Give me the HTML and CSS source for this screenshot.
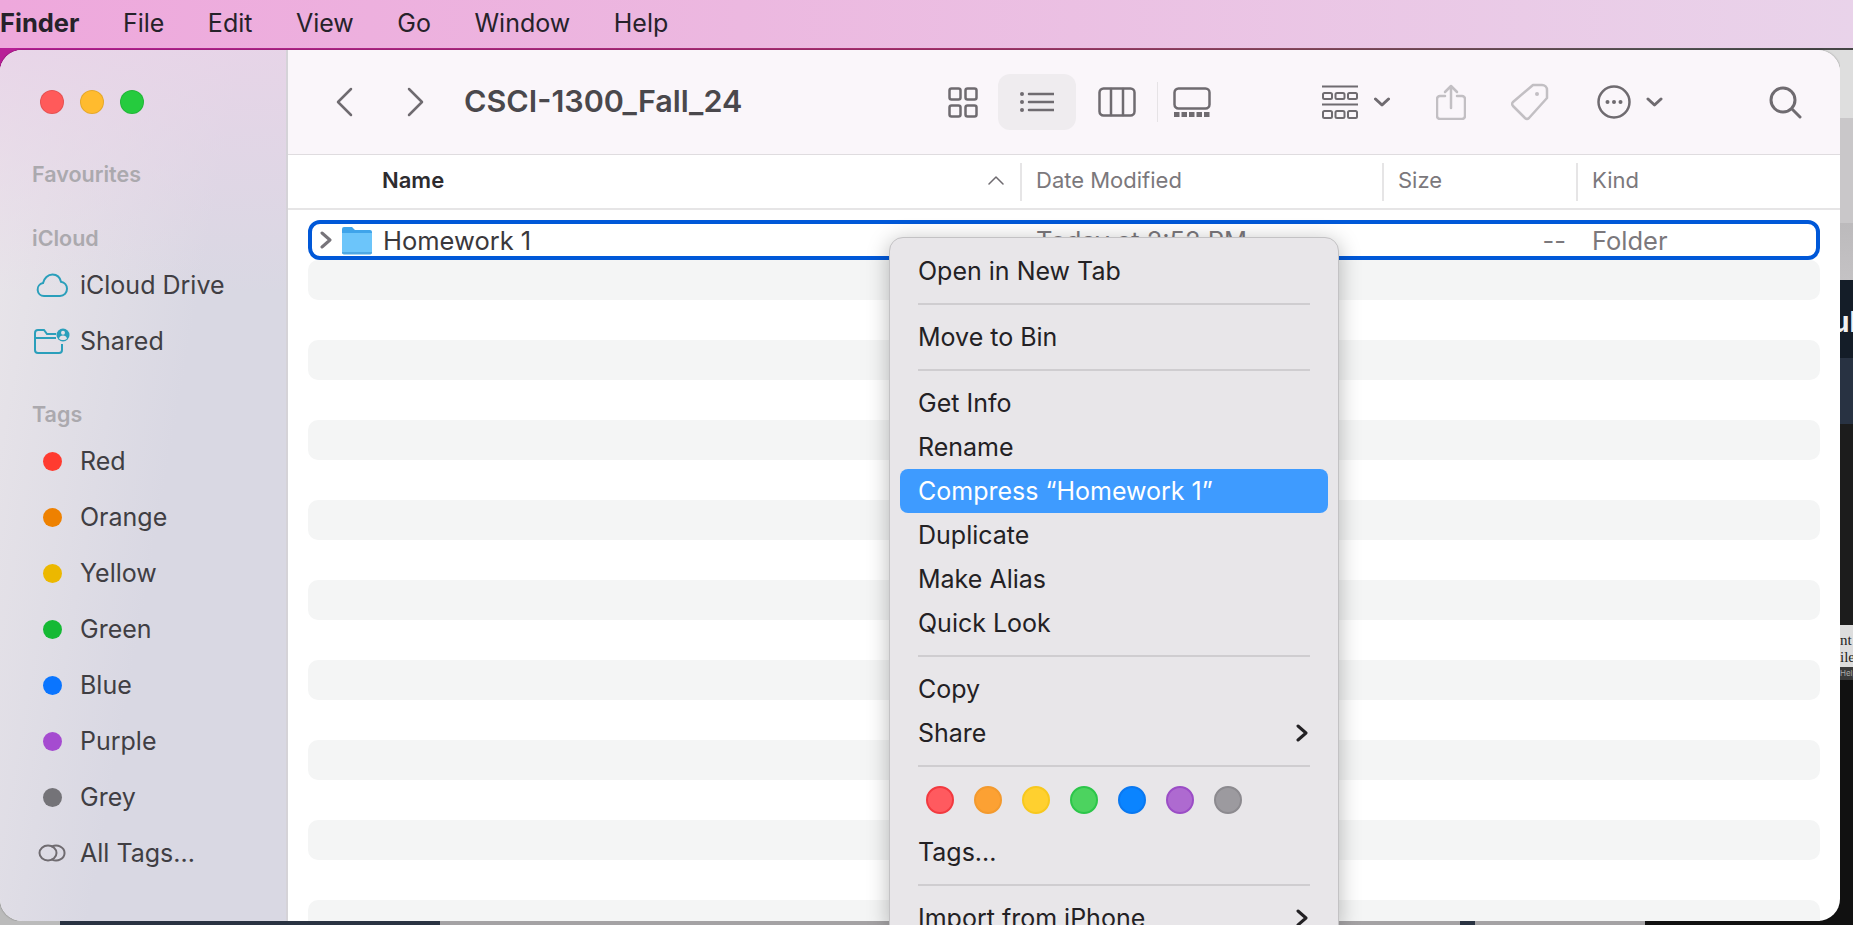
FILE: index.html
```html
<!DOCTYPE html>
<html lang="en">

<head>
    <meta charset="UTF-8">
    <title>Finder - CSCI-1300_Fall_24</title>
    <link rel="stylesheet" href="styles.css">
</head>

<body>
    <nav class="menubar">
        <span class="menubar-app">Finder</span>
        <span>File</span>
        <span>Edit</span>
        <span>View</span>
        <span>Go</span>
        <span>Window</span>
        <span>Help</span>
    </nav>
    <div class="topline"></div>

    <div class="desk">
        <div class="desk-main">
            <div class="window">
                <aside class="sidebar">
                    <div class="lights">
                        <span class="light light-red"></span>
                        <span class="light light-yellow"></span>
                        <span class="light light-green"></span>
                    </div>

                    <div class="side-label side-label-fav">Favourites</div>
                    <div class="side-label side-label-icloud">iCloud</div>
                    <div class="side-row">
                        <span class="side-icon">
                            <svg class="teal" width="32" height="24" viewBox="0 0 32 24">
                                <path d="M8 23a6.5 6.5 0 0 1-1-12.9C8 5 12 1.5 16.500 1.500c4.500 0 7.500 3 8.500 7.300 3.500.6 6 3.400 6 7 0 4-3 7.200-7 7.200z" />
                            </svg>
                        </span>
                        iCloud Drive
                    </div>
                    <div class="side-row">
                        <span class="side-icon">
                            <svg class="teal" width="36" height="26" viewBox="0 0 36 26">
                                <path d="M22 6H13l-3-4H4a3 3 0 0 0-3 3v17a3 3 0 0 0 3 3h21a3 3 0 0 0 3-3v-6" />
                                <path d="M1 10h21" />
                                <circle class="teal-fill" cx="29" cy="7" r="6.500" />
                                <circle class="person" cx="29" cy="4.800" r="2" />
                                <path class="person" d="M25 10.500c.5-2 2-3 4-3s3.500 1 4 3c-1 1-2.500 1.500-4 1.500s-3-.5-4-1.500z" />
                            </svg>
                        </span>
                        Shared
                    </div>

                    <div class="side-label side-label-tags">Tags</div>
                    <div class="side-row"><span class="side-icon"><i class="tag-dot tag-red"></i></span>Red</div>
                    <div class="side-row"><span class="side-icon"><i class="tag-dot tag-orange"></i></span>Orange</div>
                    <div class="side-row"><span class="side-icon"><i class="tag-dot tag-yellow"></i></span>Yellow</div>
                    <div class="side-row"><span class="side-icon"><i class="tag-dot tag-green"></i></span>Green</div>
                    <div class="side-row"><span class="side-icon"><i class="tag-dot tag-blue"></i></span>Blue</div>
                    <div class="side-row"><span class="side-icon"><i class="tag-dot tag-purple"></i></span>Purple</div>
                    <div class="side-row"><span class="side-icon"><i class="tag-dot tag-grey"></i></span>Grey</div>
                    <div class="side-row">
                        <span class="side-icon">
                            <svg class="ic ic-mid" width="28" height="18" viewBox="0 0 28 18">
                                <ellipse cx="10" cy="9" rx="8.500" ry="7.500" />
                                <path d="M14 2.400a8.500 7.500 0 1 1 0 13.200" />
                            </svg>
                        </span>
                        All Tags...
                    </div>
                </aside>

                <main class="content">
                    <header class="toolbar">
                        <svg class="ic tb-back" width="20" height="32" viewBox="0 0 20 32"><path d="M17 3L4 16l13 13" /></svg>
                        <svg class="ic tb-fwd" width="20" height="32" viewBox="0 0 20 32"><path d="M3 3l13 13L3 29" /></svg>
                        <div class="title">CSCI-1300_Fall_24</div>

                        <svg class="ic tb-grid" width="30" height="31" viewBox="0 0 30 31">
                            <rect x="1.500" y="1.500" width="11" height="11" rx="2" />
                            <rect x="17.500" y="1.500" width="11" height="11" rx="2" />
                            <rect x="1.500" y="18.500" width="11" height="11" rx="2" />
                            <rect x="17.500" y="18.500" width="11" height="11" rx="2" />
                        </svg>
                        <div class="view-active">
                            <svg class="ic" width="34" height="22" viewBox="0 0 34 22">
                                <path d="M9 3h25M9 11h25M9 19h25" />
                                <circle class="ic-fill" cx="2" cy="3" r="2" />
                                <circle class="ic-fill" cx="2" cy="11" r="2" />
                                <circle class="ic-fill" cx="2" cy="19" r="2" />
                            </svg>
                        </div>
                        <svg class="ic tb-cols" width="38" height="30" viewBox="0 0 38 30">
                            <rect x="1.500" y="1.500" width="35" height="27" rx="4" />
                            <path d="M13 2v26M25 2v26" />
                        </svg>
                        <div class="tb-divider"></div>
                        <svg class="ic tb-gallery" width="38" height="30" viewBox="0 0 38 30">
                            <rect x="1.500" y="1.500" width="35" height="20" rx="4" />
                            <path class="ic-dash" d="M1 27.500h36" />
                        </svg>

                        <svg class="ic ic-mid tb-group" width="36" height="34" viewBox="0 0 36 34">
                            <path d="M0 1.500h36M0 19.500h36" />
                            <rect x="1" y="8" width="9" height="6" rx="1.500" />
                            <rect x="13.500" y="8" width="9" height="6" rx="1.500" />
                            <rect x="26" y="8" width="9" height="6" rx="1.500" />
                            <rect x="1" y="26" width="9" height="7" rx="1.500" />
                            <rect x="13.500" y="26" width="9" height="7" rx="1.500" />
                            <rect x="26" y="26" width="9" height="7" rx="1.500" />
                        </svg>
                        <svg class="ic ic-bold tb-chev" width="16" height="10" viewBox="0 0 16 10"><path d="M1.500 2L8 8l6.500-6" /></svg>
                        <svg class="ic ic-off tb-share" width="30" height="36" viewBox="0 0 30 36">
                            <path d="M9 12H4a3 3 0 0 0-3 3v17a3 3 0 0 0 3 3h22a3 3 0 0 0 3-3V15a3 3 0 0 0-3-3h-5" />
                            <path d="M15 24V2M9 8l6-6 6 6" />
                        </svg>
                        <svg class="ic ic-off tb-tag" width="38" height="38" viewBox="0 0 38 38">
                            <path d="M22 2h9a5 5 0 0 1 5 5v8L18 35a3 3 0 0 1-4 0L2 23a3 3 0 0 1 0-4z" />
                            <circle class="ic-off-fill" cx="26" cy="11" r="2" />
                        </svg>
                        <svg class="ic tb-more" width="34" height="34" viewBox="0 0 34 34">
                            <circle cx="17" cy="17" r="15.500" />
                            <circle class="ic-fill" cx="10.500" cy="17" r="2" />
                            <circle class="ic-fill" cx="17" cy="17" r="2" />
                            <circle class="ic-fill" cx="23.500" cy="17" r="2" />
                        </svg>
                        <svg class="ic ic-bold tb-chev2" width="17" height="10" viewBox="0 0 17 10"><path d="M2 2l6.500 6L15 2" /></svg>
                        <svg class="ic ic-bold tb-search" width="33" height="33" viewBox="0 0 33 33">
                            <circle cx="14" cy="14" r="12" />
                            <path d="M23 23l8 8" />
                        </svg>
                    </header>

                    <div class="list-head">
                        <div class="col-name">
                            Name
                            <svg class="ic ic-thin sort" width="16" height="10" viewBox="0 0 16 10"><path d="M1 9l7-7 7 7" /></svg>
                        </div>
                        <div class="col">Date Modified</div>
                        <div class="col">Size</div>
                        <div class="col">Kind</div>
                    </div>

                    <div class="list">
                        <div class="row-selected">
                            <div class="row-name">
                                <svg class="ic ic-bold row-chev" width="12" height="18" viewBox="0 0 12 18"><path d="M2 2l8 7-8 7" /></svg>
                                <svg class="row-folder" width="32" height="29" viewBox="0 0 32 29">
                                    <path fill="#3fa4ea" d="M1 3a2 2 0 0 1 2-2h8l3 3h15a2 2 0 0 1 2 2v6H1z" />
                                    <path fill="#6cc5fa" d="M1 7h30v19a2 2 0 0 1-2 2H3a2 2 0 0 1-2-2z" />
                                    <path fill="#4ea8e4" d="M1 26h30a2 2 0 0 1-2 2.500H3A2 2 0 0 1 1 26z" />
                                </svg>
                                Homework 1
                            </div>
                            <div>Today at 2:52 PM</div>
                            <div class="row-size">--</div>
                            <div class="row-kind">Folder</div>
                        </div>
                        <div class="stripe"></div>
                        <div class="blank"></div>
                        <div class="stripe"></div>
                        <div class="blank"></div>
                        <div class="stripe"></div>
                        <div class="blank"></div>
                        <div class="stripe"></div>
                        <div class="blank"></div>
                        <div class="stripe"></div>
                        <div class="blank"></div>
                        <div class="stripe"></div>
                        <div class="blank"></div>
                        <div class="stripe"></div>
                        <div class="blank"></div>
                        <div class="stripe"></div>
                        <div class="blank"></div>
                        <div class="stripe"></div>
                    </div>
                </main>
            </div>
            <div class="bottom-strip">
                <span class="bs-light"></span>
                <span class="bs-navy"></span>
                <span class="bs-grey"></span>
                <span class="bs-navy2"></span>
                <span class="bs-grey2"></span>
                <span class="bs-black"></span>
            </div>
        </div>

        <div class="desk-right">
            <div class="dr-a"></div>
            <div class="dr-b"></div>
            <div class="dr-c"></div>
            <div class="dr-dark">ul</div>
            <div class="dr-blue"></div>
            <div class="dr-coal"></div>
            <div class="dr-page">nt<br>ile</div>
            <div class="dr-help">Help</div>
            <div class="dr-black"></div>
        </div>

        <div class="menu">
            <div class="menu-item">Open in New Tab</div>
            <div class="menu-sep"></div>
            <div class="menu-item">Move to Bin</div>
            <div class="menu-sep"></div>
            <div class="menu-item">Get Info</div>
            <div class="menu-item">Rename</div>
            <div class="menu-item menu-item-active">Compress “Homework 1”</div>
            <div class="menu-item">Duplicate</div>
            <div class="menu-item">Make Alias</div>
            <div class="menu-item">Quick Look</div>
            <div class="menu-sep"></div>
            <div class="menu-item">Copy</div>
            <div class="menu-item">
                Share
                <svg class="menu-arrow" width="12" height="18" viewBox="0 0 12 18"><path d="M2 2l8 7-8 7" /></svg>
            </div>
            <div class="menu-sep"></div>
            <div class="menu-dots">
                <i class="mdot mdot-red"></i>
                <i class="mdot mdot-orange"></i>
                <i class="mdot mdot-yellow"></i>
                <i class="mdot mdot-green"></i>
                <i class="mdot mdot-blue"></i>
                <i class="mdot mdot-purple"></i>
                <i class="mdot mdot-grey"></i>
            </div>
            <div class="menu-item">Tags...</div>
            <div class="menu-sep"></div>
            <div class="menu-item">
                Import from iPhone
                <svg class="menu-arrow" width="12" height="18" viewBox="0 0 12 18"><path d="M2 2l8 7-8 7" /></svg>
            </div>
        </div>
    </div>
</body>

</html>
```

FILE: styles.css
```css
* {
    box-sizing: border-box;
}

html,
body {
    margin: 0;
    height: 925px;
    overflow: hidden;
}

body {
    font-family: Inter, "Liberation Sans", sans-serif;
    font-size: 25px;
    color: #222;
    background: #111;
}

/* top menu bar */
.menubar {
    display: flex;
    align-items: center;
    gap: 43.500px;
    height: 48px;
    padding-bottom: 3px;
    font-size: 25px;
    color: #26222a;
    background: linear-gradient(90deg, #eea8dc 0%, #ecb8e0 40%, #e9d3ea 100%);
}

.menubar-app {
    font-size: 25.500px;
    font-weight: 700;
}

.topline {
    height: 2px;
    background: linear-gradient(90deg, #b81f97 0%, #a8326f 50%, #8a4a60 70%, #555 90%, #444 100%);
}

/* desktop behind the window */
.desk {
    position: relative;
    display: flex;
    height: 875px;
}

.desk-main {
    display: flex;
    flex-direction: column;
    width: 1840px;
    background:
        linear-gradient(90deg, #b81f97 50%, #dcdcdc 50%) top / 100% 30px no-repeat,
        linear-gradient(90deg, #bbb 50%, #111 50%) bottom / 100% 30px no-repeat;
}

.desk-right {
    display: flex;
    flex-direction: column;
    width: 13px;
    overflow: hidden;
}

.dr-a {
    height: 68px;
    background: #dedede;
}

.dr-b {
    height: 105px;
    background: #c9c7c9;
}

.dr-c {
    height: 57px;
    background: linear-gradient(180deg, #bcbabc, #c4c2c4);
}

.dr-dark {
    height: 78px;
    margin-left: -8px;
    padding-top: 22px;
    font-size: 28px;
    font-weight: 700;
    line-height: 40px;
    color: #f0f0f0;
    background: #141d28;
}

.dr-blue {
    height: 66px;
    background: #283242;
}

.dr-coal {
    height: 201px;
    background: #1c1c1c;
}

.dr-page {
    height: 42px;
    padding-top: 7px;
    font-family: "Liberation Serif", serif;
    font-size: 15px;
    line-height: 17px;
    color: #222;
    background: #dddddd;
}

.dr-help {
    height: 13px;
    font-size: 8px;
    line-height: 13px;
    color: #aaa;
    background: #3a3a3a;
}

.dr-black {
    flex: 1;
    background: #111;
}

.bottom-strip {
    display: flex;
    height: 4px;
}

.bs-light {
    width: 60px;
    background: #bbb;
}

.bs-navy {
    width: 380px;
    background: #2a3342;
}

.bs-grey {
    width: 1020px;
    background: #a4a2a4;
}

.bs-navy2 {
    width: 15px;
    background: #2a3342;
}

.bs-grey2 {
    width: 170px;
    background: #a4a2a4;
}

.bs-black {
    flex: 1;
    background: #111;
}

/* finder window */
.window {
    display: flex;
    height: 871px;
    overflow: hidden;
    border-radius: 22px;
    background: #fff;
    box-shadow: 0 0 2px rgba(0, 0, 0, 0.45);
}

.sidebar {
    flex: none;
    width: 288px;
    padding-left: 32px;
    color: #403e43;
    border-right: 2px solid #d5d3d8;
    background:
        linear-gradient(180deg, rgba(232, 212, 232, 0.9), rgba(232, 212, 232, 0) 28%),
        linear-gradient(100deg, #eae6ea 0%, #d9d8e3 55%);
}

.lights {
    display: flex;
    gap: 16px;
    margin: 40px 0 0 8px;
}

.light {
    width: 24px;
    height: 24px;
    border-radius: 50%;
    border: 1px solid rgba(0, 0, 0, 0.1);
}

.light-red {
    background: #ff5a5a;
}

.light-yellow {
    background: #ffbb2e;
}

.light-green {
    background: #25cb3e;
}

.side-label {
    height: 30px;
    font-size: 21.500px;
    font-weight: 600;
    line-height: 30px;
    color: #aba9ae;
}

.side-label-fav {
    margin-top: 45px;
}

.side-label-icloud {
    margin-top: 34px;
    margin-bottom: 4px;
}

.side-label-tags {
    margin-top: 30px;
    margin-bottom: 4px;
}

.side-row {
    display: flex;
    align-items: center;
    height: 56px;
}

.side-icon {
    display: flex;
    align-items: center;
    justify-content: center;
    width: 40px;
    margin-right: 8px;
}

.teal {
    fill: none;
    stroke: #2a9fbb;
    stroke-width: 2;
}

.teal-fill {
    fill: #2a9fbb;
    stroke: none;
}

.person {
    fill: #e4e1e8;
    stroke: none;
}

.tag-dot {
    width: 19px;
    height: 19px;
    border-radius: 50%;
}

.tag-red {
    background: #ff3b30;
}

.tag-orange {
    background: #ee8100;
}

.tag-yellow {
    background: #ecb800;
}

.tag-green {
    background: #15b934;
}

.tag-blue {
    background: #0a75ff;
}

.tag-purple {
    background: #a54bd0;
}

.tag-grey {
    background: #747378;
}

.content {
    flex: 1;
    min-width: 0;
}

/* toolbar icons */
.ic {
    flex: none;
    fill: none;
    stroke: #6f6b70;
    stroke-width: 2.5;
    stroke-linecap: round;
    stroke-linejoin: round;
}

.ic-fill {
    fill: #6f6b70;
    stroke: none;
}

.ic-mid {
    stroke-width: 2;
}

.ic-bold {
    stroke-width: 3;
}

.ic-thin {
    stroke-width: 1.5;
}

.ic-off {
    stroke: #c2bfc3;
}

.ic-off-fill {
    fill: #c2bfc3;
    stroke: none;
}

.ic-dash {
    stroke-width: 5;
    stroke-linecap: butt;
    stroke-dasharray: 5.500 2;
}

.toolbar {
    display: flex;
    align-items: center;
    height: 105px;
    border-bottom: 1px solid #dfdcdf;
    background: #faf6fa;
}

.tb-back {
    margin-left: 46px;
}

.tb-fwd {
    margin-left: 52px;
}

.title {
    flex: none;
    width: 277px;
    margin-left: 38px;
    padding-bottom: 3px;
    font-size: 30.500px;
    font-weight: 600;
    white-space: nowrap;
    color: #4a484c;
}

.tb-grid {
    margin-left: 207px;
}

.view-active {
    display: flex;
    align-items: center;
    justify-content: center;
    flex: none;
    width: 78px;
    height: 56px;
    margin-left: 20px;
    border-radius: 12px;
    background: #efecef;
}

.tb-cols {
    margin-left: 22px;
}

.tb-divider {
    flex: none;
    width: 1px;
    height: 40px;
    margin-left: 21px;
    background: #e6e3e6;
}

.tb-gallery {
    margin-left: 15px;
}

.tb-group {
    margin-left: 111px;
}

.tb-chev {
    margin-left: 16px;
}

.tb-share {
    margin-left: 46px;
}

.tb-tag {
    margin-left: 45px;
}

.tb-more {
    margin-left: 48px;
}

.tb-chev2 {
    margin-left: 15px;
}

.tb-search {
    margin-left: 106px;
}

/* list header */
.list-head {
    display: grid;
    grid-template-columns: 732px 362px 194px 1fr;
    align-items: center;
    height: 55px;
    font-size: 22px;
    color: #7b787c;
    border-bottom: 2px solid #e6e5e6;
}

.col-name {
    display: flex;
    align-items: center;
    justify-content: space-between;
    padding: 0 16px 3px 94px;
    font-weight: 600;
    color: #2d2b2f;
}

.col {
    height: 38px;
    padding-left: 14px;
    line-height: 35px;
    border-left: 2px solid #e6e5e6;
}

/* rows */
.list {
    padding: 10px 20px 0;
}

.row-selected {
    display: grid;
    grid-template-columns: 724px 363px 167px 26px 1fr;
    align-items: center;
    height: 40px;
    font-size: 25.500px;
    white-space: nowrap;
    color: #7b787c;
    border: 4px solid #0058d8;
    border-radius: 12px;
}

.row-name {
    display: flex;
    align-items: center;
    color: #3a383c;
}

.row-chev {
    margin-left: 8px;
    stroke: #77747a;
}

.row-folder {
    flex: none;
    margin: 0 10px 0 9px;
}

.row-size {
    text-align: right;
}

.row-kind {
    grid-column: 5;
}

.stripe {
    height: 40px;
    border-radius: 10px;
    background: #f4f5f5;
}

.blank {
    height: 40px;
}

/* context menu, runs off the bottom of the screen */
.menu {
    position: absolute;
    top: 187px;
    left: 889px;
    width: 450px;
    height: 690px;
    padding-top: 11px;
    overflow: hidden;
    border: 1px solid #c3c2c4;
    border-radius: 14px 14px 0 0;
    color: #232124;
    background: #e8e6e9;
    box-shadow: 0 4px 22px rgba(0, 0, 0, 0.28);
}

.menu-item {
    display: flex;
    align-items: center;
    justify-content: space-between;
    height: 44px;
    margin: 0 10px;
    padding: 0 18px;
    white-space: nowrap;
}

.menu-item-active {
    border-radius: 8px;
    color: #fff;
    background: #3e9bff;
}

.menu-sep {
    height: 2px;
    margin: 10px 28px;
    background: #cfcdd0;
}

.menu-arrow {
    margin-right: 2px;
    fill: none;
    stroke: #232124;
    stroke-width: 3;
    stroke-linecap: round;
    stroke-linejoin: round;
}

.menu-dots {
    display: flex;
    gap: 20px;
    height: 53px;
    padding: 9px 0 0 36px;
}

.mdot {
    width: 28px;
    height: 28px;
    border-radius: 50%;
    border: 2px solid;
}

.mdot-red {
    border-color: #f23a40;
    background: #ff5a5f;
}

.mdot-orange {
    border-color: #f39a2e;
    background: #fca133;
}

.mdot-yellow {
    border-color: #f7c81e;
    background: #ffd02f;
}

.mdot-green {
    border-color: #2cc64a;
    background: #4cd35f;
}

.mdot-blue {
    border-color: #0a78f0;
    background: #0a84ff;
}

.mdot-purple {
    border-color: #9b4dc6;
    background: #ae6ad0;
}

.mdot-grey {
    border-color: #8c8a8f;
    background: #9c9a9f;
}
```
